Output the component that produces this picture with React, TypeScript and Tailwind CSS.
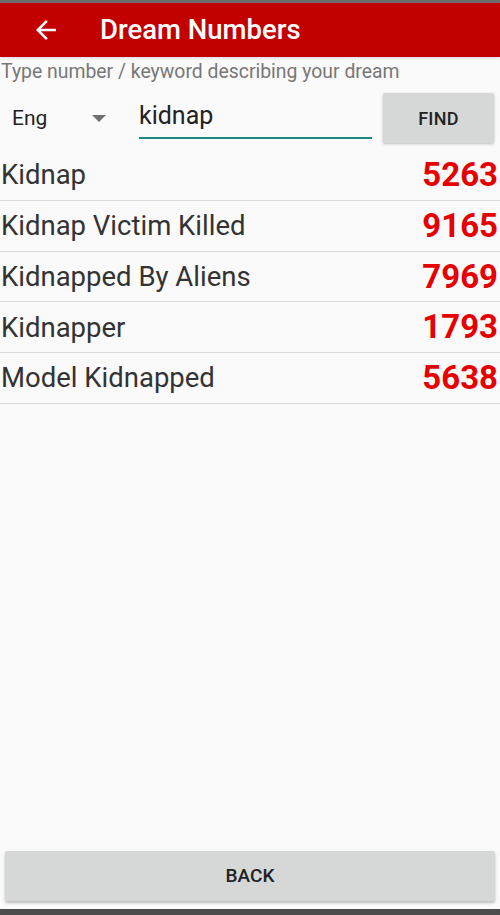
import React from "react";

const items: [string, string][] = [
  ["Kidnap", "5263"],
  ["Kidnap Victim Killed", "9165"],
  ["Kidnapped By Aliens", "7969"],
  ["Kidnapper", "1793"],
  ["Model Kidnapped", "5638"],
];

export default function App() {
  return (
    <div
      className="w-[500px] h-[915px] bg-[#fafafa] flex flex-col overflow-hidden"
      style={{ fontFamily: "Roboto, 'Noto Sans', sans-serif" }}
    >
      <div className="h-[3px] bg-[#6e6e6e]" />
      <div className="h-[54px] bg-[#c20000] flex items-center shadow-sm">
        <div className="w-[100px] flex items-center pl-[31px]">
          <svg width="30" height="30" viewBox="0 0 24 24" fill="white">
            <path d="M20 11H7.83l5.59-5.59L12 4l-8 8 8 8 1.41-1.41L7.83 13H20v-2z" />
          </svg>
        </div>
        <span className="text-white text-[27.5px] font-medium leading-none">Dream Numbers</span>
      </div>
      <div className="text-[#777777] text-[19.4px] leading-[24px] pl-[1px] pt-[3px]">
        Type number / keyword describing your dream
      </div>
      <div className="flex items-center h-[56px] mt-[6px]">
        <div className="w-[130px] flex items-center pl-[12px] pr-[24px] justify-between pt-[2px]">
          <span className="text-[21px] text-[#222]">Eng</span>
          <svg width="14" height="8" viewBox="0 0 14 8">
            <path d="M0 0h14L7 7z" fill="#6f6f6f" />
          </svg>
        </div>
        <div className="ml-[9px] w-[233px] h-[42px] flex items-end border-b-2 border-[#1d8a80]">
          <span className="text-[25px] text-[#222] leading-[30px] pb-[6px]">kidnap</span>
        </div>
        <button className="ml-[11px] w-[111px] h-[50px] bg-[#d6d7d7] rounded-[2px] shadow-[0_1px_3px_rgba(0,0,0,0.25)] text-[18px] font-medium text-[#222] tracking-[0.3px]">
          FIND
        </button>
      </div>
      <div className="flex flex-col mt-[4px]">
        {items.map(([name, num]) => (
          <div
            key={name}
            className="h-[50.75px] flex items-center justify-between border-b border-[#dcdcdc] pl-[1px] pr-[2px]"
          >
            <span className="text-[27.5px] text-[#333]">{name}</span>
            <span className="text-[33px] font-bold text-[#e60000]">{num}</span>
          </div>
        ))}
      </div>
      <div className="flex-1" />
      <div className="px-[5px] pb-[8px]">
        <button className="w-full h-[50px] bg-[#d6d7d7] rounded-[2px] shadow-[0_2px_3px_rgba(0,0,0,0.25)] text-[19px] font-medium text-[#222]">
          BACK
        </button>
      </div>
      <div className="h-[6px] bg-[#4d4d4d]" />
    </div>
  );
}
